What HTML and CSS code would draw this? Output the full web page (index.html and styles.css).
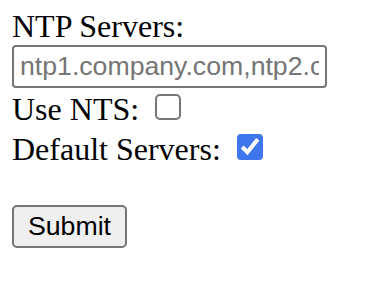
FILE: index.html
```html
<!DOCTYPE html>
<html lang="en">
  <head>
    <meta charset="UTF-8" />
    <meta name="viewport" content="width=device-width, initial-scale=1.0" />
    <title>NTP Settings</title>
    <link rel="stylesheet" href="styles.css">
  </head>
  <body>
    <form id="ntp-form">
      <label for="ntp-servers">NTP Servers:</label><br />
      <input type="text" id="ntp-servers" name="ntp-servers" placeholder="ntp1.company.com,ntp2.company.com" /><br />
      <label for="use-nts">Use NTS:</label>
      <input type="checkbox" id="use-nts" name="use-nts" /><br />
      <label for="default-servers">Default Servers:</label>
      <input type="checkbox" id="default-servers" name="default-servers" checked /><br /><br />
      <input type="submit" value="Submit" />
    </form>
  </body>
</html>
```

FILE: styles.css
```css
body {
  margin: 8px 12px;
  font-family: "Liberation Serif", serif;
}

#ntp-form {
  zoom: 2;
}

input[type="text"],
input[type="submit"] {
  font-family: "Liberation Sans", Arial, sans-serif;
}

#ntp-servers {
  box-sizing: border-box;
  width: 157.5px;
  padding: 2px 3px;
  border: 1px solid #767676;
  border-radius: 2px;
}

input[type="checkbox"] {
  accent-color: #3f76ee;
}
```
